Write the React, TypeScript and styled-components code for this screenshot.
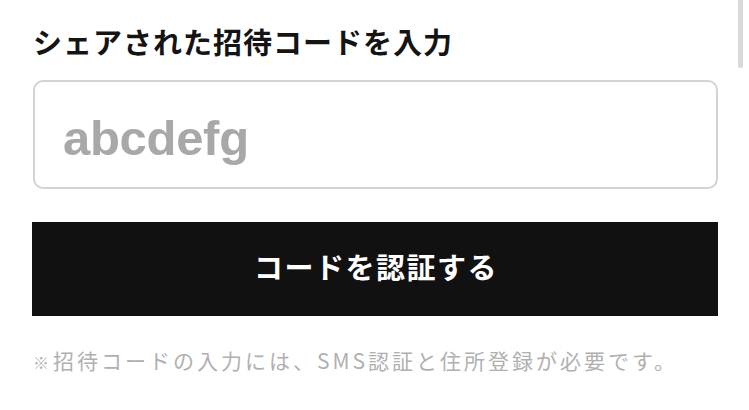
import React from "react";
import styled, { createGlobalStyle } from "styled-components";

const Global = createGlobalStyle`
  html, body { margin: 0; padding: 0; background: #ffffff; }
  body { font-family: "Noto Sans CJK JP", "Liberation Sans", sans-serif; }
`;

const Page = styled.div`
  position: relative;
  width: 749px;
  height: 410px;
  overflow: hidden;
  background: #ffffff;
  box-sizing: border-box;
  padding: 27px 31px 0 33px;
  display: flex;
  flex-direction: column;
`;

const Title = styled.h2`
  margin: 0;
  font-family: "Noto Sans CJK JP", sans-serif;
  font-weight: 700;
  font-size: 29px;
  line-height: 28px;
  letter-spacing: 1px;
  color: #141414;
`;

const CodeInput = styled.input`
  margin-top: 25px;
  box-sizing: border-box;
  width: 685px;
  height: 109px;
  border: 2px solid #d3d3d3;
  border-radius: 10px;
  padding: 6px 0 0 28px;
  outline: none;
  background: #fff;
  font-family: "Liberation Sans", Arial, sans-serif;
  font-weight: 700;
  font-size: 49px;
  color: #222;
  &::placeholder {
    color: #a8a8a8;
    letter-spacing: -0.3px;
  }
`;

const SubmitButton = styled.button`
  margin-top: 33px;
  margin-left: -1px;
  box-sizing: border-box;
  width: 686px;
  height: 94px;
  border: none;
  border-radius: 0;
  background: #121112;
  color: #ffffff;
  font-family: "Noto Sans CJK JP", sans-serif;
  font-weight: 700;
  font-size: 29px;
  letter-spacing: 1.5px;
  display: flex;
  align-items: center;
  justify-content: center;
  padding: 0 0 6px 2px;
  cursor: pointer;
`;

const Note = styled.p`
  margin: 34px 0 0 0;
  font-family: "Noto Sans CJK JP", sans-serif;
  font-weight: 400;
  font-size: 21px;
  line-height: 21px;
  letter-spacing: 3px;
  color: #b0b0b0;
  white-space: nowrap;
`;

const Mark = styled.span`
  font-size: 16px;
  letter-spacing: 4px;
`;

const ScrollThumb = styled.div`
  position: absolute;
  top: 0;
  right: 6px;
  width: 5px;
  height: 68px;
  border-radius: 0 0 3px 3px;
  background: #d9d9d9;
`;

export default function App() {
  return (
    <>
      <Global />
      <Page>
        <Title>シェアされた招待コードを入力</Title>
        <CodeInput type="text" placeholder="abcdefg" />
        <SubmitButton type="button">コードを認証する</SubmitButton>
        <Note>
          <Mark>※</Mark>招待コードの入力には、SMS認証と住所登録が必要です。
        </Note>
        <ScrollThumb />
      </Page>
    </>
  );
}
